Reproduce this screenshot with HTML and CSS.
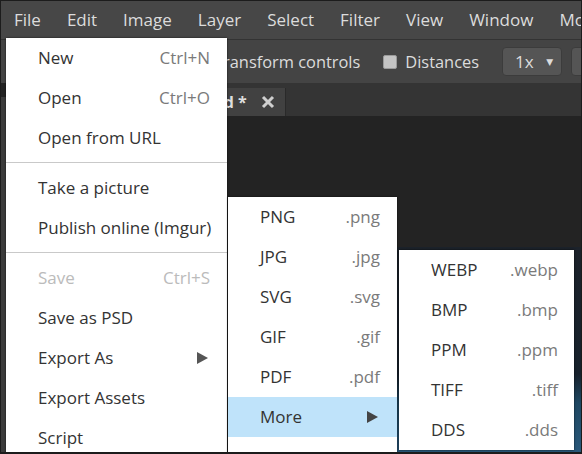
FILE: index.html
```html
<!DOCTYPE html>
<html>
<head>
<meta charset="utf-8">
<link rel="stylesheet" href="styles.css">
</head>
<body>
<div class="app">
  <div class="menubar">
    <span class="mb-item">File</span>
    <span class="mb-item">Edit</span>
    <span class="mb-item">Image</span>
    <span class="mb-item">Layer</span>
    <span class="mb-item">Select</span>
    <span class="mb-item">Filter</span>
    <span class="mb-item">View</span>
    <span class="mb-item">Window</span>
    <span class="mb-item">More</span>
  </div>
  <div class="toolbar">
    <span class="tb-check"></span>
    <span class="tb-label">Transform controls</span>
    <span class="tb-check"></span>
    <span class="tb-label">Distances</span>
    <span class="tb-select"><span>1x</span><span class="tb-caret">▼</span></span>
    <span class="tb-select tb-select2"></span>
  </div>
  <div class="workspace">
    <div class="tools"></div>
    <div class="main">
      <div class="tabbar">
        <div class="tab"><span class="tab-name">Untitled *</span><svg class="tab-close" width="14" height="14" viewBox="0 0 14 14"><path d="M2 2 L12 12 M12 2 L2 12" stroke="#cfcfcf" stroke-width="3" stroke-linecap="butt"/></svg></div>
      </div>
      <div class="canvas">
        <div class="doc"></div>
      </div>
    </div>
  </div>

  <div class="menu menu-file">
    <div class="mi"><span>New</span><span class="sc">Ctrl+N</span></div>
    <div class="mi"><span>Open</span><span class="sc">Ctrl+O</span></div>
    <div class="mi"><span>Open from URL</span></div>
    <div class="sep"></div>
    <div class="mi"><span>Take a picture</span></div>
    <div class="mi"><span>Publish online (Imgur)</span></div>
    <div class="sep"></div>
    <div class="mi disabled"><span>Save</span><span class="sc">Ctrl+S</span></div>
    <div class="mi"><span>Save as PSD</span></div>
    <div class="mi"><span>Export As</span><svg class="arrow" width="11" height="12" viewBox="0 0 11 12"><polygon points="0,0 11,6 0,12" fill="#555"/></svg></div>
    <div class="mi"><span>Export Assets</span></div>
    <div class="mi"><span>Script</span></div>
  </div>

  <div class="menu menu-export">
    <div class="mi"><span>PNG</span><span class="sc">.png</span></div>
    <div class="mi"><span>JPG</span><span class="sc">.jpg</span></div>
    <div class="mi"><span>SVG</span><span class="sc">.svg</span></div>
    <div class="mi"><span>GIF</span><span class="sc">.gif</span></div>
    <div class="mi"><span>PDF</span><span class="sc">.pdf</span></div>
    <div class="mi active"><span>More</span><svg class="arrow" width="11" height="12" viewBox="0 0 11 12"><polygon points="0,0 11,6 0,12" fill="#444"/></svg></div>
    <div class="mi"></div>
  </div>

  <div class="menu menu-more">
    <div class="mi"><span>WEBP</span><span class="sc">.webp</span></div>
    <div class="mi"><span>BMP</span><span class="sc">.bmp</span></div>
    <div class="mi"><span>PPM</span><span class="sc">.ppm</span></div>
    <div class="mi"><span>TIFF</span><span class="sc">.tiff</span></div>
    <div class="mi"><span>DDS</span><span class="sc">.dds</span></div>
  </div>
</div>
</body>
</html>
```
FILE: styles.css
```css
* { box-sizing: border-box; }
html, body { margin: 0; padding: 0; background: #1b1b1b; }
body { font-family: "Open Sans", "DejaVu Sans", sans-serif; }

.app {
  position: relative;
  width: 582px;
  height: 454px;
  border: 1px solid #1c1c1c;
  border-bottom-width: 2px;
  overflow: hidden;
  background: #232323;
  display: flex;
  flex-direction: column;
}

.menubar {
  height: 39px;
  flex: none;
  background: #474747;
  display: flex;
  align-items: center;
  border-bottom: 1px solid #333;
  white-space: nowrap;
}
.mb-item {
  color: #dcdcdc;
  font-size: 17px;
  padding: 0 13px;
  line-height: 38px;
}

.toolbar {
  height: 43px;
  flex: none;
  background: #444;
  display: flex;
  align-items: center;
  padding-left: 191px;
  white-space: nowrap;
  color: #dcdcdc;
  font-size: 16.4px;
}
.tb-check {
  width: 14px;
  height: 14px;
  background: #c4c4c4;
  border: 1px solid #9a9a9a;
  border-radius: 2px;
  margin-right: 8px;
  flex: none;
}
.tb-label { margin-right: 23px; }
.tb-select {
  flex: none;
  width: 60px;
  height: 29px;
  background: #555;
  border: 1px solid #3c3c3c;
  border-radius: 4px;
  display: flex;
  align-items: center;
  justify-content: space-between;
  padding: 0 8px 0 12px;
  font-size: 17px;
  color: #dcdcdc;
  margin-right: 9px;
}
.tb-caret { font-size: 9px; color: #dcdcdc; }
.tb-select2 { width: 40px; }

.workspace {
  flex: 1;
  display: flex;
  min-height: 0;
}
.tools {
  width: 40px;
  flex: none;
  background: #3c3c3c;
  margin-top: 14px;
}
.main {
  flex: 1;
  display: flex;
  flex-direction: column;
}
.tabbar {
  height: 33px;
  flex: none;
  background: #343434;
  display: flex;
  align-items: flex-end;
  padding-left: 115px;
}
.tab {
  height: 28px;
  background: #414141;
  border-right: 1px solid #2a2a2a;
  display: flex;
  align-items: center;
  padding: 0 10px 0 12px;
  gap: 14px;
  color: #dedede;
  font-weight: bold;
  font-size: 16px;
}
.tab-close { flex: none; }

.canvas {
  flex: 1;
  background: #232323;
  display: flex;
  justify-content: flex-end;
  align-items: flex-end;
}
.doc {
  width: 192px;
  height: 205px;
  background:
    linear-gradient(180deg, #1c222a 0%, #17212c 62%, #1e4762 76%, #29587a 100%);
}

/* menus */
.menu {
  position: absolute;
  background: #fff;
  box-shadow: 0 0 2px rgba(0,0,0,0.7);
  font-size: 17px;
  color: #333;
}
.mi {
  height: 40px;
  display: flex;
  align-items: center;
  justify-content: space-between;
  padding: 0 17px 2px 32px;
  white-space: nowrap;
}
.mi .sc { color: #7a7a7a; }
.mi.disabled, .mi.disabled .sc { color: #bbb; }
.mi.active { background: #bfe3fa; }
.arrow { margin-right: 2px; margin-top: 2px; }
.sep {
  height: 10px;
  position: relative;
}
.sep::after {
  content: "";
  position: absolute;
  left: 0; right: 0; top: 4px;
  height: 1px;
  background: #c9c9c9;
}

.menu-file { left: 5px; top: 37px; width: 221px; height: 440px; }
.menu-export { left: 227px; top: 196px; width: 169px; }
.menu-more { left: 398px; top: 249px; width: 175px; }
.menu-more .mi { padding-right: 16px; }
```
